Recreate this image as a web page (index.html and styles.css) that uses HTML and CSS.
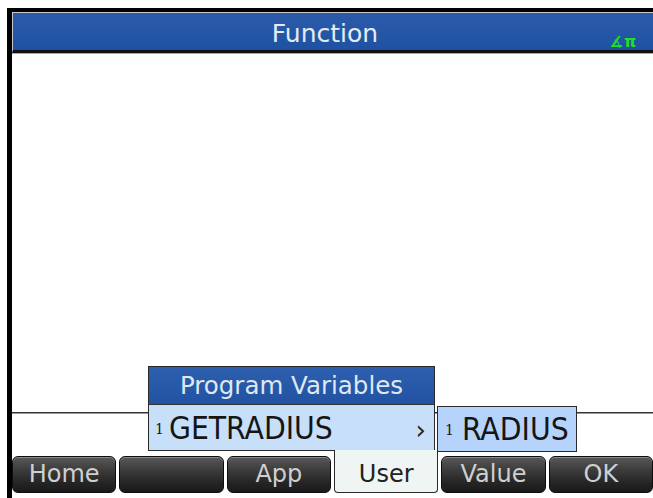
FILE: index.html
```html
<!DOCTYPE html>
<html>
	<head>
		<meta charset="utf-8">
		<link rel="stylesheet" href="styles.css">
	</head>

	<body>
		<div class="frame">
			<section class="screen">
				<header class="titlebar">
					<span class="title">Function</span>
					<span class="status">∡π</span>
				</header>

				<main class="plot"></main>

				<div class="editline"></div>

				<nav class="softkeys">
					<button class="key">Home</button>
					<button class="key"></button>
					<button class="key">App</button>
					<button class="key tab">User</button>
					<button class="key">Value</button>
					<button class="key">OK</button>
				</nav>

				<div class="menu">
					<div class="menu-head">Program Variables</div>
					<div class="menu-item">
						<span class="count">1</span>
						<span class="name">GETRADIUS</span>
						<span class="more">›</span>
					</div>
				</div>

				<div class="submenu">
					<span class="count">1</span>
					<span class="name">RADIUS</span>
				</div>
			</section>
		</div>
	</body>
</html>
```

FILE: styles.css
```css
* {
	box-sizing: border-box;
}

html, body {
	margin: 0;
	background: #fff;
	overflow: hidden;
}

body {
	font-family: "DejaVu Sans", sans-serif;
	width: 653px;
	height: 498px;
}

.frame {
	margin-left: 7px;
	margin-top: 8px;
	border-left: 5px solid #000;
	border-top: 4px solid #000;
	height: 490px;
}

.screen {
	position: relative;
	width: 641px;
	height: 486px;
	display: flex;
	flex-direction: column;
	background: #fff;
}

.titlebar {
	position: relative;
	height: 41px;
	flex: none;
	border-top: 1px solid #c9c9c9;
	border-left: 1px solid #c9c9c9;
	border-bottom: 3px solid #111;
	box-shadow: 0 1px 0 #a8a8a8;
	background: linear-gradient(#2c5aa8, #2456a6 60%, #1f51a2);
	padding-right: 16px;
	padding-top: 5px;
	display: flex;
	align-items: center;
	justify-content: center;

	& .title {
		color: #e4ebf3;
		font-size: 25px;
		line-height: 32px;
	}

	& .status {
		position: absolute;
		right: 16px;
		bottom: 1px;
		color: #1fe21f;
		font-size: 15px;
		font-weight: bold;
		line-height: 13px;
		letter-spacing: 1px;
	}
}

.plot {
	flex: 1;
}

.editline {
	height: 44px;
	flex: none;
	border-top: 1px solid #333;
	box-shadow: inset 0 1px 0 #9a9a9a;
}

.softkeys {
	flex: none;
	height: 37px;
	margin-bottom: 5px;
	display: grid;
	grid-template-columns: repeat(6, 1fr);
	gap: 3px;
}

.key {
	margin: 0;
	padding: 0;
	border: 1px solid #0d0d0d;
	border-radius: 6px;
	background: linear-gradient(#585858, #3a3a3a 40%, #242424 75%, #1a1a1a);
	box-shadow: inset 0 1px 0 #8a8a8a;
	color: #cfcfcf;
	font-family: "DejaVu Sans", sans-serif;
	font-size: 24px;
	line-height: 33px;

	&.tab {
		position: relative;
		z-index: 2;
		margin-top: -6px;
		border-top: none;
		border-color: #2a2a2a;
		border-radius: 0 0 4px 4px;
		background: #eef5f3;
		box-shadow: none;
		color: #222;
		padding-top: 6px;
	}
}

.menu {
	position: absolute;
	left: 136px;
	top: 354px;
	width: 287px;
	height: 85px;
	border: 1px solid #2a2a2a;
	background: #c7dff8;

	& .menu-head {
		height: 38px;
		border-bottom: 1px solid #333;
		background: linear-gradient(#2e5fae, #2253a3);
		color: #dfe8f2;
		font-size: 24.5px;
		line-height: 37px;
		text-align: center;
	}

	& .menu-item {
		height: 45px;
		display: flex;
		align-items: baseline;
		padding: 3px 8px 0 6px;
		color: #151515;
		line-height: 40px;
	}

	& .more {
		margin-left: auto;
		font-size: 26px;
		color: #222;
	}
}

.count {
	font-family: "DejaVu Serif", serif;
	font-size: 14px;
	margin-right: 5px;
	position: relative;
	top: -5px;
}

.name {
	font-family: "DejaVu Sans Condensed", "DejaVu Sans", sans-serif;
	font-size: 31.5px;
}

.submenu {
	position: absolute;
	left: 425px;
	top: 394px;
	width: 140px;
	height: 46px;
	border: 1px solid #2a2a2a;
	background: #b6d3fb;
	color: #151515;
	display: flex;
	align-items: baseline;
	padding: 2px 6px 0 7px;
	line-height: 40px;

	& .count {
		margin-right: 8px;
	}
}
```
